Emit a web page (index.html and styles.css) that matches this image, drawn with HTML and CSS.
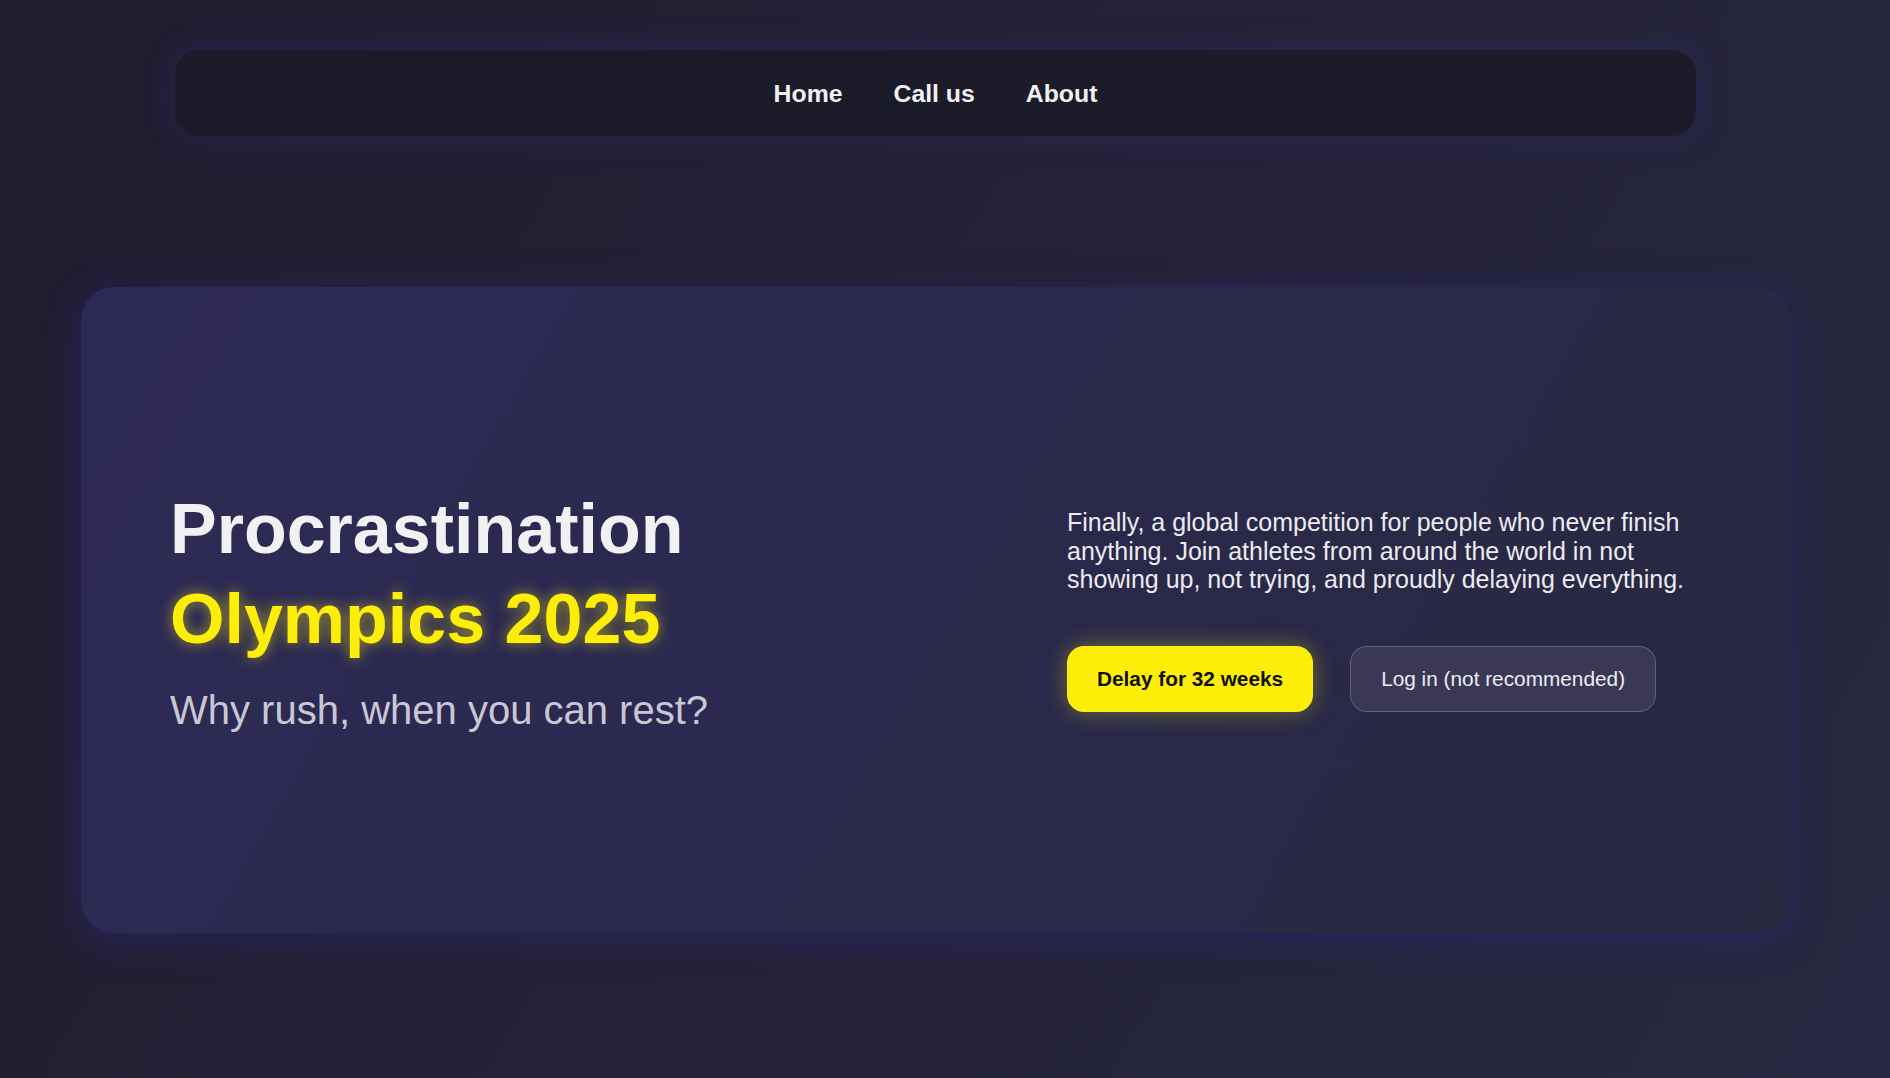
FILE: index.html
```html
<!DOCTYPE html>
<html lang="en">
<head>
<meta charset="utf-8">
<title>Procrastination Olympics 2025</title>
<link rel="stylesheet" href="styles.css">
</head>
<body>
<div class="page">
  <nav class="nav">
    <a class="nav-link" href="#">Home</a>
    <a class="nav-link" href="#">Call us</a>
    <a class="nav-link" href="#">About</a>
  </nav>
  <section class="hero">
    <div class="hero-left">
      <h1 class="title"><span class="title-main">Procrastination</span><span class="title-accent">Olympics 2025</span></h1>
      <p class="subtitle">Why rush, when you can rest?</p>
    </div>
    <div class="hero-right">
      <p class="lead">Finally, a global competition for people who never finish anything. Join athletes from around the world in not showing up, not trying, and proudly delaying everything.</p>
      <div class="actions">
        <a class="btn btn-primary" href="#">Delay for 32 weeks</a>
        <a class="btn btn-ghost" href="#">Log in (not recommended)</a>
      </div>
    </div>
  </section>
</div>
</body>
</html>
```

FILE: styles.css
```css
html {
  overflow-y: scroll;
}
html::-webkit-scrollbar {
  width: 5px;
  background: #2b2b2e;
}
html::-webkit-scrollbar-thumb {
  background: #2b2b2e;
}
body {
  margin: 0;
  min-height: 100vh;
  font-family: "Liberation Sans", Arial, sans-serif;
  background: linear-gradient(120deg, #1f1d2f 0%, #232236 45%, #282840 100%);
  color: #f0f0f3;
}
.page {
  width: 1871px;
  padding-top: 50px;
}
.nav {
  width: 1521px;
  height: 86px;
  margin: 0 auto;
  box-sizing: border-box;
  display: flex;
  align-items: center;
  justify-content: center;
  gap: 51px;
  background: #1c1b29;
  border-radius: 24px;
  box-shadow: 0 0 28px rgba(52, 42, 120, 0.55);
}
.nav-link {
  color: #f0f0f3;
  text-decoration: none;
  font-weight: 700;
  font-size: 24.8px;
  line-height: 28px;
  padding-top: 2px;
}
.hero {
  width: 1709px;
  height: 646px;
  margin: 151px auto 0;
  box-sizing: border-box;
  padding: 0 89px;
  display: flex;
  align-items: center;
  justify-content: space-between;
  border-radius: 34px;
  background: linear-gradient(120deg, #2e2a56 0%, #2b294f 40%, #28283f 100%);
  box-shadow: 0 6px 34px rgba(46, 36, 108, 0.75);
}
.hero-left {
  margin-top: -4px;
}
.title {
  margin: 0;
  font-size: 70px;
  line-height: 90px;
  font-weight: 700;
}
.title-main {
  display: block;
  color: #f1f1f3;
}
.title-accent {
  display: block;
  color: #fdee0a;
  text-shadow: 0 0 14px rgba(253, 238, 10, 0.55);
}
.subtitle {
  margin: 23px 0 0;
  font-size: 40px;
  line-height: 46px;
  color: #c9c7d4;
}
.hero-right {
  width: 634px;
}
.lead {
  margin: 0;
  font-size: 25px;
  line-height: 28.7px;
  color: #ebebf0;
}
.actions {
  display: flex;
  gap: 37px;
  margin-top: 52px;
}
.btn {
  display: block;
  height: 66px;
  box-sizing: border-box;
  padding: 0 30px;
  border-radius: 17px;
  font-size: 20.8px;
  line-height: 66px;
  text-decoration: none;
  white-space: nowrap;
}
.btn-primary {
  background: #fdee0a;
  color: #111111;
  font-weight: 700;
  box-shadow: 0 0 22px rgba(253, 238, 10, 0.35);
}
.btn-ghost {
  background: #3b3856;
  color: #ececf1;
  border: 1px solid rgba(255, 255, 255, 0.2);
  line-height: 64px;
  padding: 0 30px;
}
```
